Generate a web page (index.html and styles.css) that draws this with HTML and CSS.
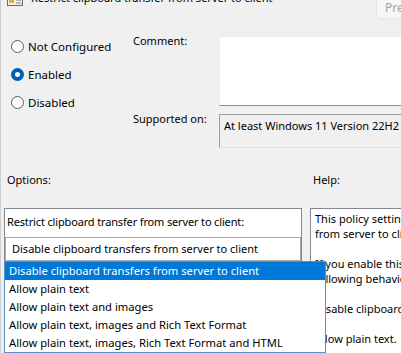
FILE: index.html
```html
<!DOCTYPE html>
<html lang="en">
<head>
  <meta charset="UTF-8">
  <meta name="viewport" content="width=device-width, initial-scale=1.0">
  <title>Restrict clipboard transfer from server to client</title>
  <link rel="stylesheet" href="styles.css">
</head>
<body>
  <div class="window">
    <div class="titlebar">
      <svg class="app-icon" width="16" height="16" viewBox="0 0 16 16">
        <rect x="0.5" y="1.5" width="15" height="13" fill="#f4efe2" stroke="#6d6a62"/>
        <rect x="2" y="4" width="5" height="8" fill="#d9b44a"/>
        <line x1="9" y1="6" x2="14" y2="6" stroke="#7a7a7a"/>
        <line x1="9" y1="9" x2="14" y2="9" stroke="#7a7a7a"/>
        <line x1="9" y1="12" x2="14" y2="12" stroke="#7a7a7a"/>
      </svg>
      <span class="title">Restrict clipboard transfer from server to client</span>
      <span class="btn-prev">Previous Setting</span>
    </div>

    <div class="settings">
      <div class="states">
        <div class="radio"><span class="dot"></span>Not Configured</div>
        <div class="radio checked"><span class="dot"></span>Enabled</div>
        <div class="radio"><span class="dot"></span>Disabled</div>
      </div>
      <div class="fields">
        <span class="field-label">Comment:</span>
        <div class="comment-box"></div>
        <span class="field-label">Supported on:</span>
        <div class="supported-box">At least Windows 11 Version 22H2</div>
      </div>
    </div>

    <div class="panes">
      <div class="pane-label">Options:</div>
      <div class="pane-label">Help:</div>

      <div class="options-box">
        <div class="option-title">Restrict clipboard transfer from server to client:</div>
        <div class="combo">Disable clipboard transfers from server to client</div>
        <ul class="dropdown">
          <li class="selected">Disable clipboard transfers from server to client</li>
          <li>Allow plain text</li>
          <li>Allow plain text and images</li>
          <li>Allow plain text, images and Rich Text Format</li>
          <li>Allow plain text, images, Rich Text Format and HTML</li>
        </ul>
      </div>

      <div class="help-box">
        <p>This policy setting allows you to restrict clipboard transfers<br>from server to client.</p>
        <p>If you enable this setting, you must choose from the<br>following behaviors:</p>
        <p>Disable clipboard transfers from server to client.</p>
        <p>Allow plain text.</p>
      </div>
    </div>
  </div>
</body>
</html>
```

FILE: styles.css
```css
body {
  margin: 0;
  font-family: "Noto Sans", "Open Sans", sans-serif;
  font-size: 11px;
  color: #000;
  background-color: #f0f0f0;
  overflow: hidden;
}

.window {
  width: 401px;
  height: 353px;
  border-left: 1px solid #cfcfcf;
  box-sizing: border-box;
  overflow: hidden;
}

.titlebar {
  display: flex;
  align-items: flex-start;
  height: 33px;
  padding-left: 6px;
  overflow: hidden;
}

.app-icon {
  flex-shrink: 0;
  margin-top: -9px;
}

.title {
  margin-left: 8px;
  margin-top: -10px;
  line-height: 16px;
  font-size: 11px;
  white-space: nowrap;
}

.btn-prev {
  flex-shrink: 0;
  margin-left: auto;
  margin-right: -90px;
  margin-top: -4px;
  width: 105px;
  height: 21px;
  padding-left: 8px;
  line-height: 22px;
  color: #a3a3a3;
  background-color: #f7f7f7;
  border: 1px solid #e6e6e6;
  border-radius: 3px;
  font-size: 12px;
  white-space: nowrap;
}

.settings {
  display: flex;
}

.states {
  flex-shrink: 0;
  width: 122px;
  padding-left: 10px;
  padding-top: 5px;
  display: flex;
  flex-direction: column;
  gap: 12px;
}

.radio {
  display: flex;
  align-items: center;
  height: 16px;
  font-size: 11.5px;
  white-space: nowrap;
}

.dot {
  width: 11px;
  height: 11px;
  border: 1px solid #5c5c5c;
  border-radius: 50%;
  background-color: #fafafa;
  margin-right: 4px;
  box-sizing: content-box;
}

.radio.checked .dot {
  width: 5px;
  height: 5px;
  border: 4px solid #005fb8;
  background-color: #fff;
}

.fields {
  flex: 1;
  min-width: 0;
  display: grid;
  grid-template-columns: 86px 1fr;
  grid-template-rows: 70px 34px;
  row-gap: 8px;
  padding-top: 3px;
}

.field-label {
  margin-top: -3px;
  line-height: 16px;
  white-space: nowrap;
}

.comment-box {
  background-color: #fff;
  border: 1px solid #ececec;
  border-bottom-color: #8d8d8d;
  border-right: none;
}

.supported-box {
  border: 1px solid #a0a0a0;
  border-right: none;
  border-bottom-color: #e3e3e3;
  padding: 3px 4px;
  line-height: 16px;
  white-space: nowrap;
  overflow: hidden;
}

.panes {
  display: grid;
  grid-template-columns: 298px 1fr;
  column-gap: 8px;
  padding-left: 3px;
  margin-top: 24px;
}

.pane-label {
  padding-left: 3px;
  height: 36px;
  line-height: 16px;
}

.options-box {
  position: relative;
  height: 160px;
  background-color: #fff;
  border: 1px solid #828790;
  box-sizing: border-box;
}

.option-title {
  padding: 5px 2px 0;
  height: 23px;
  line-height: 16px;
  letter-spacing: -0.15px;
  white-space: nowrap;
}

.combo {
  height: 24px;
  line-height: 22px;
  padding-left: 6px;
  border: 1px solid #a9a9a9;
  box-sizing: border-box;
  white-space: nowrap;
}

.dropdown {
  position: absolute;
  top: 52px;
  left: -1px;
  width: 322px;
  margin: 0;
  padding: 0;
  list-style: none;
  background-color: #fff;
  border: 1px solid #5d8ec4;
  box-sizing: border-box;
  z-index: 2;
}

.dropdown li {
  height: 18px;
  line-height: 18px;
  padding-left: 4px;
  font-size: 11.2px;
  white-space: nowrap;
}

.dropdown li.selected {
  background-color: #0078d7;
  color: #fff;
}

.help-box {
  min-width: 0;
  height: 160px;
  background-color: #fff;
  border: 1px solid #828790;
  border-right: none;
  box-sizing: border-box;
  padding: 2px 4px;
  line-height: 15px;
  white-space: nowrap;
  overflow: hidden;
}

.help-box p {
  margin: 0 0 15px;
}
```
